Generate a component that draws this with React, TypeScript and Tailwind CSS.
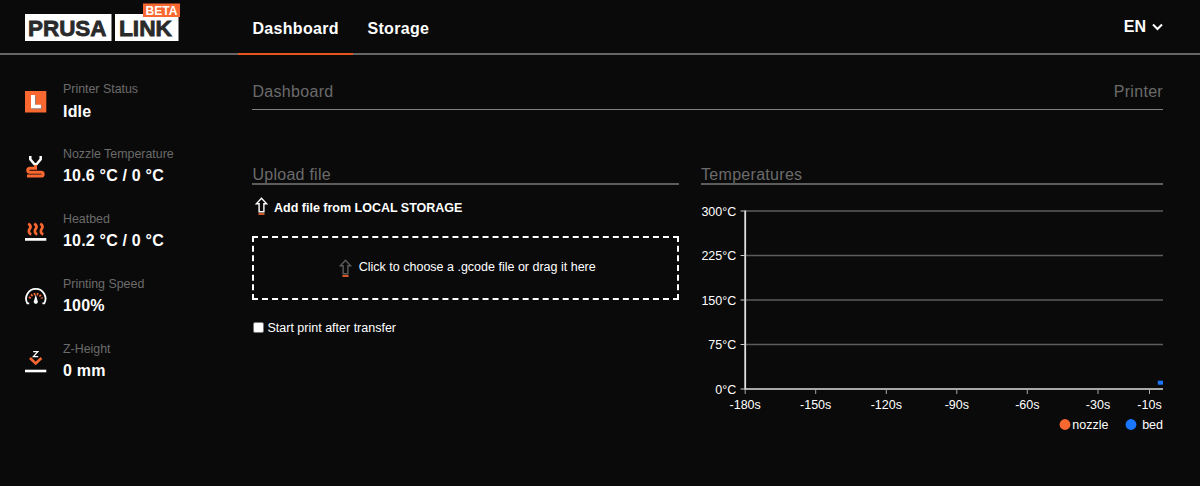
import React from 'react';

interface StatusItem {
  label: string;
  value: string;
  icon: React.ReactNode;
}

function StatusIcon({ children }: { children: React.ReactNode }) {
  return (
    <svg width="22" height="22" viewBox="0 0 22 22" fill="none" className="shrink-0">
      {children}
    </svg>
  );
}

const statusItems: StatusItem[] = [
  {
    label: 'Printer Status',
    value: 'Idle',
    icon: (
      <StatusIcon>
        <rect width="21.3" height="21.5" fill="#fa6831" />
        <path d="M6.8 5h4.2v9.5h6v3.8H6.8z" fill="#9c7a6c" />
        <path d="M6 4h4v9.7h6v3.5H6z" fill="#fff" />
      </StatusIcon>
    ),
  },
  {
    label: 'Nozzle Temperature',
    value: '10.6 °C / 0 °C',
    icon: (
      <StatusIcon>
        <path d="M5.3 0v3.4l4.2 4.8h2l4.2-4.8V0" stroke="#fff" strokeWidth="2.5" />
        <path
          d="M10.5 9v3.300H4.700a1.800 1.800 0 0 0 0 3.900h11.500a1.900 1.900 0 0 1 0 3.900H2"
          stroke="#fa6831"
          strokeWidth="3"
        />
      </StatusIcon>
    ),
  },
  {
    label: 'Heatbed',
    value: '10.2 °C / 0 °C',
    icon: (
      <StatusIcon>
        <path
          d="M3.2 2.8c2.800 1.400 2.800 3.200 1.400 5.200s-1 4.200 1.600 5.400M9.200 2.800c2.800 1.400 2.800 3.200 1.400 5.200s-1 4.200 1.600 5.400M15.200 2.800c2.800 1.400 2.800 3.200 1.400 5.200s-1 4.200 1.600 5.400"
          stroke="#fa6831"
          strokeWidth="2.8"
        />
        <path d="M0 18.400h21.300" stroke="#fff" strokeWidth="2.7" />
      </StatusIcon>
    ),
  },
  {
    label: 'Printing Speed',
    value: '100%',
    icon: (
      <StatusIcon>
        <path d="M4.200 17.300H2.300A9.700 9.700 0 1 1 19.300 17.300H17.400" stroke="#fff" strokeWidth="1.8" />
        <path d="M4.600 12.500A6.500 6.500 0 0 1 17 12.500" stroke="#fa6831" strokeWidth="2.4" strokeDasharray="1.7 1.3" />
        <path d="M10.800 8.500l1.600 5.800a2.100 2.100 0 1 1-3.200 0z" fill="#fff" />
      </StatusIcon>
    ),
  },
  {
    label: 'Z-Height',
    value: '0 mm',
    icon: (
      <StatusIcon>
        <path d="M8.200 0.700h4.600L8.400 5.600h4.800" stroke="#fff" strokeWidth="1.3" />
        <path d="M5 7l5.700 5.500L16.400 7" stroke="#fa6831" strokeWidth="2.6" />
        <path d="M0 20h21.300" stroke="#fff" strokeWidth="2.6" />
      </StatusIcon>
    ),
  },
];

const yTicks = [
  { label: '300°C', y: 26 },
  { label: '225°C', y: 70.5 },
  { label: '150°C', y: 115 },
  { label: '75°C', y: 159.5 },
  { label: '0°C', y: 204 },
];

const xTicks = [
  { label: '-180s', x: 44.2 },
  { label: '-150s', x: 114.7 },
  { label: '-120s', x: 185.3 },
  { label: '-90s', x: 255.8 },
  { label: '-60s', x: 326.3 },
  { label: '-30s', x: 397 },
  { label: '-10s', x: 448.5 },
];

function Logo() {
  return (
    <svg width="156" height="42" viewBox="0 0 156 42" className="font-bold">
      <rect y="14" width="86.5" height="27" fill="#fff" />
      <rect x="90" y="14" width="63.5" height="27" fill="#fff" />
      <text x="3" y="35.5" fontSize="22.5" fill="#2a2a2a" stroke="#2a2a2a" strokeWidth="0.8" textLength="78.5" lengthAdjust="spacingAndGlyphs">
        PRUSA
      </text>
      <text x="94" y="35.5" fontSize="22.5" fill="#2a2a2a" stroke="#2a2a2a" strokeWidth="0.8" textLength="53" lengthAdjust="spacingAndGlyphs">
        LINK
      </text>
      <rect x="118" y="3.5" width="37" height="13.5" fill="#fa6831" />
      <text x="120.5" y="15" fontSize="12.5" fill="#fff" textLength="32" lengthAdjust="spacingAndGlyphs">
        BETA
      </text>
    </svg>
  );
}

function UploadIcon({ color }: { color: string }) {
  return (
    <svg width="13" height="18" viewBox="0 0 13 18" fill="none" className="shrink-0">
      <path d="M6.5 1.2L1.3 6.800h2.800v8h4.800v-8h2.800z" stroke={color} strokeWidth="1.4" />
      <path d="M3.5 17h6" stroke="#fa6831" strokeWidth="1.7" />
    </svg>
  );
}

function TemperatureChart() {
  return (
    <svg width="463" height="256" viewBox="0 0 463 256" className="block">
      {/* Grid */}
      {yTicks.slice(0, 4).map((tick) => (
        <path key={tick.label} d={`M45 ${tick.y}H462`} stroke="#5c5c5c" strokeWidth="1.3" />
      ))}

      {/* Axes */}
      <path d="M44 204H462" stroke="#a8a8a8" strokeWidth="2" />
      <path d="M44.2 25.5V205" stroke="#e0e0e0" strokeWidth="1.8" />
      {yTicks.map((tick) => (
        <g key={tick.label}>
          <path d={`M39.5 ${tick.y}h5`} stroke="#c8c8c8" />
          <text x="35.3" y={tick.y + 4.5} fill="#fff" fontSize="12.5" textAnchor="end">
            {tick.label}
          </text>
        </g>
      ))}
      {xTicks.map((tick) => (
        <g key={tick.label}>
          <path d={`M${tick.x} 204v5`} stroke="#a8a8a8" />
          <text x={tick.x} y="224" fill="#fff" fontSize="12.5" textAnchor="middle">
            {tick.label}
          </text>
        </g>
      ))}

      {/* Series */}
      <path d="M456.8 197.7h5.2" stroke="#1976ff" strokeWidth="4" />

      {/* Legend */}
      <circle cx="364" cy="239.5" r="5.4" fill="#fa6831" />
      <text x="371.3" y="244" fill="#fff" fontSize="12.5">nozzle</text>
      <circle cx="430" cy="239.5" r="5.4" fill="#1976ff" />
      <text x="462" y="244" fill="#fff" fontSize="12.5" textAnchor="end">bed</text>
    </svg>
  );
}

export default function App() {
  return (
    <div className="h-[486px] overflow-hidden bg-[#0a0a0a] font-['Liberation_Sans',Arial,sans-serif] text-white">
      {/* Header */}
      <header className="flex h-[55px] items-start border-b-2 border-[#666] pl-[25px] pr-[37px]">
        <div className="w-[213px]">
          <Logo />
        </div>
        <nav className="flex text-base font-bold tracking-[0.3px]">
          <a className="h-[55px] w-[115px] border-b-2 border-[#e8541e] pl-[14.5px] pt-[17px]">Dashboard</a>
          <a className="h-[55px] pl-[14.5px] pt-[17px]">Storage</a>
        </nav>
        <div className="ml-auto flex items-center gap-[6px] pt-[15px] text-base font-bold">
          EN
          <svg width="11" height="8" viewBox="0 0 11 8" fill="none">
            <path d="M1 1.5l4.5 4.5L10 1.5" stroke="#fff" strokeWidth="2" />
          </svg>
        </div>
      </header>

      <div className="flex">
        {/* Printer telemetry */}
        <aside className="w-[252px] pl-[25px] pt-[25px]">
          {statusItems.map((item) => (
            <div key={item.label} className="group flex h-[65px] items-start gap-4">
              <div className="pt-[11px]">{item.icon}</div>
              <div>
                <p className="text-[12.4px] leading-[18px] text-[#6b6b6b]">{item.label}</p>
                <p className="text-base leading-[26px] font-bold tracking-[0.2px] group-first:leading-[27px]">{item.value}</p>
              </div>
            </div>
          ))}
        </aside>

        {/* Content */}
        <main className="w-[911px] pt-[25px]">
          <div className="flex h-[30px] justify-between border-b border-[#808080] pl-[0.5px] tracking-[0.3px] text-[#6b6b6b]">
            <span>Dashboard</span>
            <span>Printer</span>
          </div>

          <div className="flex justify-between pt-[53px]">
            <section className="w-[427px]">
              <h2 className="h-[22px] border-b-2 border-[#5c5c5c] pl-[0.5px] tracking-[0.25px] text-[#6b6b6b]">Upload file</h2>
              <div className="flex items-start gap-[6.5px] pl-[2.5px] pt-3">
                <UploadIcon color="#fff" />
                <span className="text-[12.5px] leading-[22px] font-bold">Add file from LOCAL STORAGE</span>
              </div>
              <div className="mt-[17px] flex h-[64px] items-center justify-center gap-[6.5px] border-2 border-dashed border-white pl-1">
                <UploadIcon color="#5c5c5c" />
                <span className="pb-[2px] text-[12.5px]">Click to choose a .gcode file or drag it here</span>
              </div>
              <label className="mt-[18px] flex items-center gap-1 pl-[0.5px] text-[12.5px] leading-[20px]">
                <span className="mb-[2px] size-[11px] rounded-[2px] border border-[#767676] bg-white" />
                Start print after transfer
              </label>
            </section>

            <section className="w-[462px]">
              <h2 className="h-[22px] border-b-2 border-[#5c5c5c] tracking-[0.3px] text-[#6b6b6b]">Temperatures</h2>
              <TemperatureChart />
            </section>
          </div>
        </main>
      </div>
    </div>
  );
}
